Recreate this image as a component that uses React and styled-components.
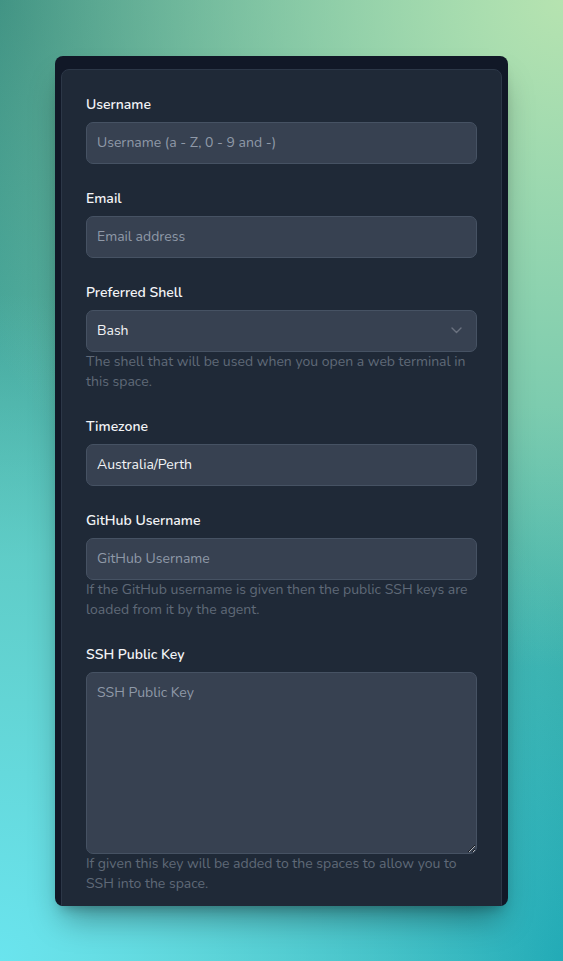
import React from "react";
import styled, { createGlobalStyle } from "styled-components";

const Global = createGlobalStyle`
  html, body { margin: 0; padding: 0; }
  body {
    font-family: "Nunito", Lato, "Noto Sans", sans-serif;
    -webkit-font-smoothing: antialiased;
  }
  * { box-sizing: border-box; }
`;

const Page = styled.div`
  width: 100%;
  height: 961px;
  display: flex;
  align-items: center;
  justify-content: center;
  background:
    radial-gradient(circle at 100% 0%, #b6e3b0 0%, rgba(182, 227, 176, 0) 60%),
    radial-gradient(circle at 0% 100%, #6ae4ee 0%, rgba(106, 228, 238, 0) 60%),
    radial-gradient(circle at 100% 100%, #15a0ac 0%, rgba(21, 160, 172, 0) 50%),
    radial-gradient(circle at 0% 0%, #2c857c 0%, rgba(44, 133, 124, 0) 50%),
    #58bdae;
`;

const Card = styled.div`
  width: 453px;
  height: 850px;
  background: #111827;
  border-radius: 8px;
  padding: 13px 6px 0 6px;
  overflow: hidden;
  box-shadow: 0 20px 30px -8px rgba(0, 0, 0, 0.35), 0 8px 12px -6px rgba(0, 0, 0, 0.25);
`;

const Panel = styled.div`
  background: #1f2937;
  border: 1px solid #2c3747;
  border-radius: 8px;
  padding: 25px 24px 40px;
  display: flex;
  flex-direction: column;
  gap: 25px;
`;

const Field = styled.div`
  display: flex;
  flex-direction: column;
`;

const Label = styled.label`
  font-size: 14px;
  line-height: 20px;
  font-weight: 600;
  color: #f3f4f6;
  margin-bottom: 7px;
`;

const Input = styled.input`
  width: 100%;
  height: 42px;
  background: #374151;
  border: 1px solid #465263;
  border-radius: 7px;
  padding: 0 10px;
  font-family: inherit;
  font-size: 14px;
  color: #f3f4f6;
  outline: none;
  &::placeholder { color: #8f99a8; }
`;

const SelectBox = styled.div`
  height: 42px;
  background: #374151;
  border: 1px solid #465263;
  border-radius: 7px;
  padding: 0 14px 0 10px;
  display: flex;
  align-items: center;
  justify-content: space-between;
  font-size: 14px;
  color: #f3f4f6;
`;

const TextArea = styled.textarea`
  width: 100%;
  height: 182px;
  background: #374151;
  border: 1px solid #465263;
  border-radius: 7px;
  padding: 10px 10px;
  font-family: inherit;
  font-size: 14px;
  line-height: 20px;
  color: #f3f4f6;
  outline: none;
  display: block;
  &::placeholder { color: #8f99a8; }
`;

const Help = styled.p`
  margin: 0;
  font-size: 14px;
  line-height: 20px;
  color: #5f6978;
`;

const Chevron = () => (
  <svg width="11" height="7" viewBox="0 0 11 7" fill="none">
    <path d="M1 1l4.5 4.5L10 1" stroke="#6b7280" strokeWidth="1.4" strokeLinecap="round" strokeLinejoin="round" />
  </svg>
);

export default function App() {
  return (
    <>
      <Global />
      <Page>
        <Card>
          <Panel>
            <Field>
              <Label>Username</Label>
              <Input placeholder="Username (a - Z, 0 - 9 and -)" />
            </Field>
            <Field>
              <Label>Email</Label>
              <Input placeholder="Email address" />
            </Field>
            <Field>
              <Label>Preferred Shell</Label>
              <SelectBox>
                <span>Bash</span>
                <Chevron />
              </SelectBox>
              <Help>The shell that will be used when you open a web terminal in this space.</Help>
            </Field>
            <Field>
              <Label>Timezone</Label>
              <Input defaultValue="Australia/Perth" />
            </Field>
            <Field>
              <Label>GitHub Username</Label>
              <Input placeholder="GitHub Username" />
              <Help>If the GitHub username is given then the public SSH keys are loaded from it by the agent.</Help>
            </Field>
            <Field>
              <Label>SSH Public Key</Label>
              <TextArea placeholder="SSH Public Key" />
              <Help>If given this key will be added to the spaces to allow you to SSH into the space.</Help>
            </Field>
          </Panel>
        </Card>
      </Page>
    </>
  );
}
